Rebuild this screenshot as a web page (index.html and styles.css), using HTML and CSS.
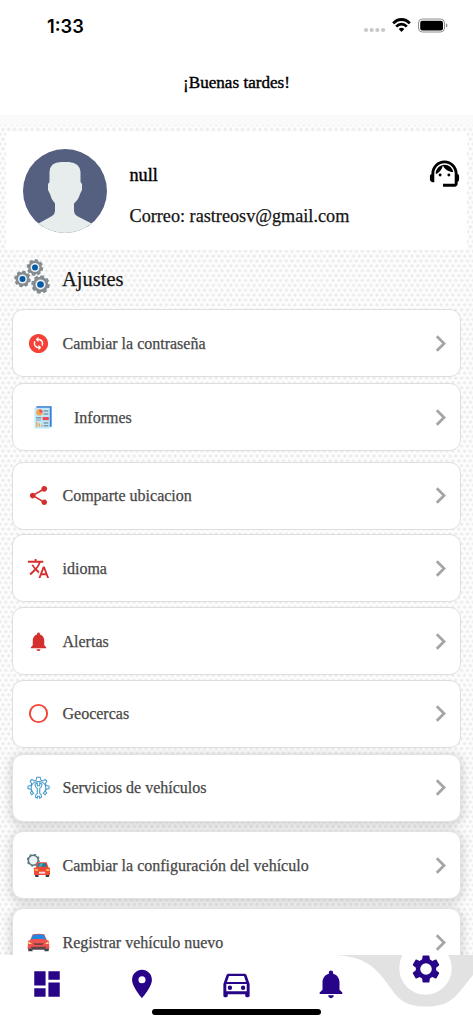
FILE: index.html
```html
<!DOCTYPE html>
<html lang="es">
<head>
<meta charset="utf-8">
<title>Ajustes</title>
<link rel="stylesheet" href="styles.css">
</head>
<body>
<svg class="defs" width="0" height="0" aria-hidden="true">
  <symbol id="chevron" viewBox="0 0 24 24"><path d="M10 6L8.59 7.41 13.17 12l-4.58 4.59L10 18l6-6z"/></symbol>
  <symbol id="bell" viewBox="0 0 24 24"><path d="M12 22c1.1 0 2-.9 2-2h-4c0 1.1.89 2 2 2zm6-6v-5c0-3.07-1.64-5.64-4.5-6.32V4c0-.83-.67-1.5-1.5-1.5s-1.5.67-1.5 1.5v.68C7.63 5.36 6 7.92 6 11v5l-2 2v1h16v-1l-2-2z"/></symbol>
  <symbol id="cog" viewBox="0 0 24 24"><path d="M19.14 12.94c.04-.3.06-.61.06-.94 0-.32-.02-.64-.07-.94l2.03-1.58c.18-.14.23-.41.12-.61l-1.92-3.32c-.12-.22-.37-.29-.59-.22l-2.39.96c-.5-.38-1.03-.7-1.62-.94l-.36-2.54c-.04-.24-.24-.41-.48-.41h-3.84c-.24 0-.43.17-.47.41l-.36 2.54c-.59.24-1.13.57-1.62.94l-2.39-.96c-.22-.08-.47 0-.59.22L2.74 8.87c-.12.21-.08.47.12.61l2.03 1.58c-.05.3-.09.63-.09.94s.02.64.07.94l-2.03 1.58c-.18.14-.23.41-.12.61l1.92 3.32c.12.22.37.29.59.22l2.39-.96c.5.38 1.03.7 1.62.94l.36 2.54c.05.24.24.41.48.41h3.84c.24 0 .44-.17.47-.41l.36-2.54c.59-.24 1.13-.56 1.62-.94l2.39.96c.22.08.47 0 .59-.22l1.92-3.32c.12-.22.07-.47-.12-.61l-2.01-1.58zM12 16.1A4.1 4.1 0 1 1 12 7.9a4.1 4.1 0 0 1 0 8.2z"/></symbol>
  <symbol id="gear" viewBox="-10 -10 20 20">
    <g fill="#858c91" transform="rotate(12)"><circle r="8"/><path d="M-2.500-7L-1.800-9.700H1.800L2.500-7V7L1.800 9.700H-1.800L-2.500 7z"/><path d="M-2.500-7L-1.800-9.700H1.800L2.500-7V7L1.800 9.700H-1.800L-2.500 7z" transform="rotate(45)"/><path d="M-2.500-7L-1.800-9.700H1.800L2.500-7V7L1.800 9.700H-1.800L-2.500 7z" transform="rotate(90)"/><path d="M-2.500-7L-1.800-9.700H1.800L2.500-7V7L1.800 9.700H-1.800L-2.500 7z" transform="rotate(135)"/></g>
    <circle r="5.200" fill="#eef2f4"/><circle r="3.500" fill="#075aa5"/>
  </symbol>
</svg>
<div class="phone">
  <header class="top">
    <div class="status">
      <span class="time">1:33</span>
      <svg class="signals" width="86" height="18" viewBox="0 0 86 18">
        <g fill="#c8c8c8"><circle cx="3" cy="13" r="2.1"/><circle cx="8.7" cy="13" r="2.1"/><circle cx="14.4" cy="13" r="2.1"/><circle cx="20.1" cy="13" r="2.1"/></g>
        <g fill="none" stroke="#000" stroke-width="2.8"><path d="M30.2 6.4C34.900 1.200 42.100 1.200 46.800 6.400"/><path d="M33.200 9.600c3-3.200 7.600-3.200 10.600 0"/></g>
        <path d="M35.700 12q2.800-2.300 5.600 0l-2.800 3z"/>
        <rect x="55.500" y="2" width="26" height="13" rx="4" fill="none" stroke="#8d8d8d"/>
        <rect x="57.200" y="3.700" width="22.800" height="9.800" rx="2.300"/><path d="M83 6.300q3 2.200 0 4.400z" fill="#8d8d8d"/>
      </svg>
    </div>
    <h1 class="greeting">¡Buenas tardes!</h1>
  </header>
  <main class="content">
    <section class="profile">
      <svg class="avatar" width="84" height="84" viewBox="0 0 84 84">
        <circle cx="42" cy="42" r="42" fill="#556080"/>
        <path d="M15.500 74.500L29 67q3-2 3-5v-7.500Q28 50 27 45l-2-4v-6l1.500-2V23Q27 13 38 13h8q11 1 11.500 10v10l1.500 2v6l-2 4q-1 5-6 9.500V62q0 3 3 5l14.500 7.500A42 42 0 0 1 15.500 74.500z" fill="#e7eced"/>
      </svg>
      <div class="person"><p class="name">null</p><p class="mail">Correo: rastreosv@gmail.com</p></div>
      <svg class="agent" width="35" height="35" viewBox="0 0 24 24"><path d="M21 12.220C21 6.730 16.740 3 12 3c-4.690 0-9 3.650-9 9.280-.6.34-1 .98-1 1.720v2c0 1.100.9 2 2 2h1v-6.100c0-3.870 3.130-7 7-7s7 3.130 7 7V19h-8v2h8c1.100 0 2-.9 2-2v-1.220c.59-.31 1-.92 1-1.640v-2.300c0-.7-.41-1.310-1-1.620z"/><circle cx="9" cy="13" r="1"/><circle cx="15" cy="13" r="1"/><path d="M18 11.030C17.520 8.180 15.040 6 12.050 6c-3.030 0-6.290 2.510-6.030 6.450 2.470-1.010 4.330-3.210 4.860-5.890 1.310 2.630 4 4.440 7.120 4.470z"/></svg>
    </section>
    <div class="heading">
      <svg width="36" height="35" viewBox="0 0 36 35"><use href="#gear" x="12.500" y="0" width="17" height="17"/><use href="#gear" x="0" y="11.500" width="17" height="17"/><use href="#gear" x="17" y="16" width="19" height="19"/></svg>
      <h2>Ajustes</h2>
    </div>
    <ul class="menu">
      <li class="card">
        <svg class="icon" viewBox="0 0 24 24" fill="#f44336"><path d="M12 2C6.480 2 2 6.480 2 12s4.480 10 10 10 10-4.480 10-10S17.520 2 12 2zm.06 17v-2.010H12c-1.280 0-2.560-.49-3.540-1.460-1.710-1.710-1.920-4.350-.64-6.290l1.100 1.100c-.71 1.330-.53 3.010.59 4.130.7.7 1.620 1.030 2.540 1.010v-2.140l2.830 2.830L12.060 19zm4.110-4.240l-1.100-1.100c.71-1.330.53-3.010-.59-4.130C13.790 8.840 12.900 8.500 12 8.500h-.06v2.150L9.110 7.830 11.940 5v2.020c1.300-.02 2.610.45 3.600 1.450 1.700 1.700 1.910 4.350.63 6.290z"/></svg>
        <span>Cambiar la contraseña</span><svg class="chev"><use href="#chevron"/></svg>
      </li>
      <li class="card report">
        <svg class="icon" viewBox="0 0 24 24"><path d="M3.500.2H19.500V21.800H3.500z" fill="#3b80d2"/><path d="M1.500 1.800H17.500V23.500H1.500z" fill="#bfe9fb"/><circle cx="6.700" cy="6.700" r="3.300" fill="#f9a24b"/><path d="M6.700 6.700V3.300a3.400 3.400 0 0 1 3.400 3.400z" fill="#ef5366"/><g fill="#7e9ba5"><path d="M11 4.500h5V6h-5zM11 7.500h5V9h-5zM3.300 11.500h5.200V13H3.300zM3.300 14h5.200v1H3.300zM11 17h5v1.500h-5zM11 19.800h5v1.500h-5z"/></g><path d="M10 11.500h6.500v3.300H10z" fill="#e94b5c"/><path d="M3.300 16.500h1.300v5.200H3.300zM6 18h1.300v3.700H6zM8.500 19.600h1.300v2.100H8.500z" fill="#f7a04a"/></svg>
        <span>Informes</span><svg class="chev"><use href="#chevron"/></svg>
      </li>
      <li class="card">
        <svg class="icon" viewBox="0 0 24 24" fill="#d32f2f"><path d="M18 16.080c-.76 0-1.440.3-1.960.77L8.910 12.700c.05-.23.09-.46.09-.7s-.04-.47-.09-.7l7.050-4.110c.54.5 1.250.81 2.040.81 1.660 0 3-1.340 3-3s-1.340-3-3-3-3 1.340-3 3c0 .24.04.47.09.7L8.040 9.810C7.500 9.310 6.790 9 6 9c-1.660 0-3 1.340-3 3s1.340 3 3 3c.79 0 1.500-.31 2.040-.81l7.120 4.160c-.05.21-.08.43-.08.65 0 1.610 1.310 2.920 2.920 2.920s2.920-1.310 2.920-2.920-1.310-2.920-2.920-2.920z"/></svg>
        <span>Comparte ubicacion</span><svg class="chev"><use href="#chevron"/></svg>
      </li>
      <li class="card">
        <svg class="icon" viewBox="0 0 24 24" fill="#d32f2f"><path d="M12.870 15.070l-2.540-2.510.03-.03c1.740-1.940 2.980-4.170 3.710-6.530H17V4h-7V2H8v2H1v1.990h11.170C11.500 7.920 10.440 9.750 9 11.350 8.070 10.320 7.300 9.190 6.690 8h-2c.73 1.630 1.730 3.170 2.980 4.560l-5.090 5.020L4 19l5-5 3.110 3.110.76-2.040zM18.500 10h-2L12 22h2l1.120-3h4.750L21 22h2l-4.500-12zm-2.620 7l1.620-4.330L19.120 17h-3.240z"/></svg>
        <span>idioma</span><svg class="chev"><use href="#chevron"/></svg>
      </li>
      <li class="card">
        <svg class="icon" fill="#d32f2f"><use href="#bell"/></svg>
        <span>Alertas</span><svg class="chev"><use href="#chevron"/></svg>
      </li>
      <li class="card">
        <svg class="icon" viewBox="0 0 24 24"><circle cx="12" cy="12" r="9" fill="none" stroke="#f44336" stroke-width="2"/></svg>
        <span>Geocercas</span><svg class="chev"><use href="#chevron"/></svg>
      </li>
      <li class="card raised">
        <svg class="icon" viewBox="0 0 24 24" fill="none" stroke="#4499c9" stroke-width="1.100"><path d="M5 19.500l-1.500-1.800 1.300-2-.8-2L1 13v-2.500l3-.6.8-2-1.500-2.600L5 3.500l2.500 1.600 2-.8.8-3h3.400l.8 3 2 .8L19 3.500l1.700 1.800-1.500 2.600.8 2 3 .6V13l-3 .7-.8 2 1.300 2-1.500 1.800-2-1.500q4-4 2-8.500Q17 5.800 12 5.800T5 9.500q-2 4.500 2 8.500z"/><path d="M10.700 12.800Q8 11.500 8.500 8.500l2.200-1.200v2.800h2.600V7.300l2.200 1.200q.5 3-2.200 4.300v5.400q2.200 1.200 1.800 4l-1.900 1-.2-2h-2l-.2 2-1.900-1q-.4-2.800 1.800-4z"/></svg>
        <span>Servicios de vehículos</span><svg class="chev"><use href="#chevron"/></svg>
      </li>
      <li class="card raised">
        <svg class="icon" viewBox="0 0 24 24"><circle cx="6.500" cy="6.500" r="5.200" fill="#eef3f5" stroke="#557481" stroke-width="1.600"/><circle cx="6.500" cy="6.500" r="6.200" fill="none" stroke="#557481" stroke-width="1.200" stroke-dasharray="2.200 2.670"/><path d="M8 20.500h4V24H8.800zM19.500 20.500h4L23 24h-3.500z" fill="#353d43"/><path d="M7 14.500l2.300-.3L11 8.500h9.500l2 5.700 1.500.3v7.300H7.500z" fill="#f04a35"/><path d="M10.700 13.300l1.300-3.700h7.600l1.300 3.700z" fill="#247b98"/><path d="M14 9.600h3l-2 3.700h-3z" fill="#4ea6bb"/><path d="M8 16h3.500v1.500H8zM20 16h3.500v1.500H20z" fill="#ffd355"/><path d="M12.500 18.500h6.500v2h-6.500z" fill="#f5dedd"/></svg>
        <span>Cambiar la configuración del vehículo</span><svg class="chev"><use href="#chevron"/></svg>
      </li>
      <li class="card raised">
        <svg class="icon" viewBox="0 0 24 24"><path d="M.8 17h5v4.200H1.500zM18.200 17h5l-.7 4.200h-4.300z" fill="#37474f"/><path d="M1 10.500L3.500 9 6 3.300Q12 2.400 18 3.300L20.500 9l2.500 1.500.3 8H.7z" fill="#ef5350"/><path d="M4 8.800L6.500 4q5.500-.9 11 0L20 8.800q-8-1.300-16 0z" fill="#1e88e5"/><path d="M1.500 10.800l3.800 2.700H1.500zM22.500 10.800l-3.800 2.700h3.800z" fill="#ffe082"/><path d="M6.500 12.800h11L16 14.700H8z" fill="#754044"/><path d="M4 16.500h16l-1.500 3h-13z" fill="#5a4549"/></svg>
        <span>Registrar vehículo nuevo</span><svg class="chev"><use href="#chevron"/></svg>
      </li>
    </ul>
  </main>
  <nav class="tabs">
    <svg class="notch" width="473" height="69" viewBox="0 0 473 69"><path d="M333 0C362 1 374 10 387 28C398 44 404 51.500 426 51.500C448 51.500 454 44 465 30L473 20V0z" fill="#e2e2e2"/><path d="M399.300 5V13.500A26.200 26.200 0 0 0 451.700 13.500Q451.700 6 448.200 0H402.500Q399.300 6 399.300 13.500z" fill="#fff"/></svg>
    <a class="tab"><svg width="34" height="34" viewBox="0 0 24 24"><path d="M3 13h8V3H3v10zm0 8h8v-6H3v6zm10 0h8V11h-8v10zm0-18v6h8V3h-8z"/></svg></a>
    <a class="tab"><svg width="34" height="34" viewBox="0 0 24 24"><path d="M12 2C8.130 2 5 5.130 5 9c0 5.250 7 13 7 13s7-7.750 7-13c0-3.870-3.130-7-7-7zm0 9.500a2.500 2.500 0 0 1 0-5 2.500 2.500 0 0 1 0 5z"/></svg></a>
    <a class="tab car"><svg width="35" height="35" viewBox="0 0 24 24"><path d="M18.920 5.010C18.720 4.420 18.160 4 17.500 4h-11c-.66 0-1.210.42-1.420 1.010L3 11v8c0 .55.45 1 1 1h1c.55 0 1-.45 1-1v-1h12v1c0 .55.45 1 1 1h1c.55 0 1-.45 1-1v-8l-2.080-5.990zM6.850 5.500h10.290l1.380 4.110H5.470L6.850 5.500zM19 16H5v-5h14v5z"/><circle cx="7.500" cy="13.500" r="1.500"/><circle cx="16.500" cy="13.500" r="1.500"/></svg></a>
    <a class="tab"><svg width="34" height="34"><use href="#bell"/></svg></a>
    <a class="tab active"><svg width="34" height="34"><use href="#cog"/></svg></a>
    <span class="home"></span>
  </nav>
</div>
</body>
</html>
```

FILE: styles.css
```css
* { box-sizing: border-box; margin: 0; padding: 0; }
body { width: 473px; height: 1024px; overflow: hidden; background: #fff; font-family: "Liberation Serif", serif; color: #151515; }
svg { display: block; flex: none; }
.defs { position: absolute; }
.phone { height: 1024px; display: flex; flex-direction: column; }
.top { height: 115px; flex: none; background: #fff; }
.status { height: 52px; display: flex; justify-content: space-between; align-items: center; padding: 0 24px 0 47px; }
.time { font: 600 18.3px/22px Inter, sans-serif; color: #000; }
.greeting { margin-top: 20px; text-align: center; font-size: 17.1px; line-height: 22px; font-weight: 400; color: #000; -webkit-text-stroke: .4px; }
.content {
  height: 840px; flex: none; overflow: hidden; padding-top: 17px;
  background:
    linear-gradient(#fafafa, #fafafa) 0 0 / 100% 10px no-repeat,
    radial-gradient(circle, #ebebeb 1.2px, transparent 2px) 0 9.500px / 5.850px 9.750px,
    radial-gradient(circle, #ebebeb 1.2px, transparent 2px) 2.920px 14.380px / 5.850px 9.750px,
    #fdfdfd;
}
.profile { height: 118px; margin: 0 6px; padding: 17px 5px 0 17px; display: flex; align-items: flex-start; background: #fff; }
.person { flex: 1; margin-left: 22.500px; padding-top: 13.500px; font-size: 18.200px; line-height: 24px; }
.name { color: #000; -webkit-text-stroke: .4px; }
.mail { margin-top: 17px; -webkit-text-stroke: .25px; }
.agent { margin-top: 7px; }
.heading { height: 59px; display: flex; padding: 9px 0 0 14px; gap: 12px; }
.heading h2 { margin-top: 7px; font-size: 20.500px; line-height: 26px; font-weight: 400; -webkit-text-stroke: .25px; }
.menu { list-style: none; display: flex; flex-direction: column; padding: 0 12px; gap: 5px; }
.card { height: 68px; flex: none; display: flex; align-items: center; padding: 0 3px 0 13.500px; background: #fff; border: 1px solid #dedede; border-radius: 11px; font-size: 16px; color: #484848; -webkit-text-stroke: .25px; }
.card:nth-child(1) { margin-bottom: 1px; }
.card.report { margin-bottom: 5.500px; padding-left: 20px; }
.card.report .icon { margin-right: 18px; }
.card .icon { width: 23px; height: 23px; margin-right: 13px; }
.card span { flex: 1; padding-top: 1px; white-space: nowrap; }
.card:nth-child(n+4) { margin-top: -.2px; }
.chev { width: 33px; height: 33px; fill: #a5a5a5; }
.card.raised { margin-top: .8px; margin-bottom: 3.500px; border-color: #e2e2e2; box-shadow: 0 2px 9px 2px rgba(0,0,0,.15); }
.tabs { position: relative; height: 69px; flex: none; display: grid; grid-template-columns: repeat(5, 94.600px); background: #fff; fill: #280489; }
.notch { position: absolute; left: 0; top: 0; }
.tab { display: flex; justify-content: center; align-items: flex-start; padding-top: 12px; position: relative; }
.tab.car { padding-top: 13px; }
.tab.active { padding-top: 0; }
.tab.active svg { margin-top: -3px; }
.home { position: absolute; left: 152px; bottom: 9px; width: 169px; height: 6px; border-radius: 3px; background: #000; }
```
